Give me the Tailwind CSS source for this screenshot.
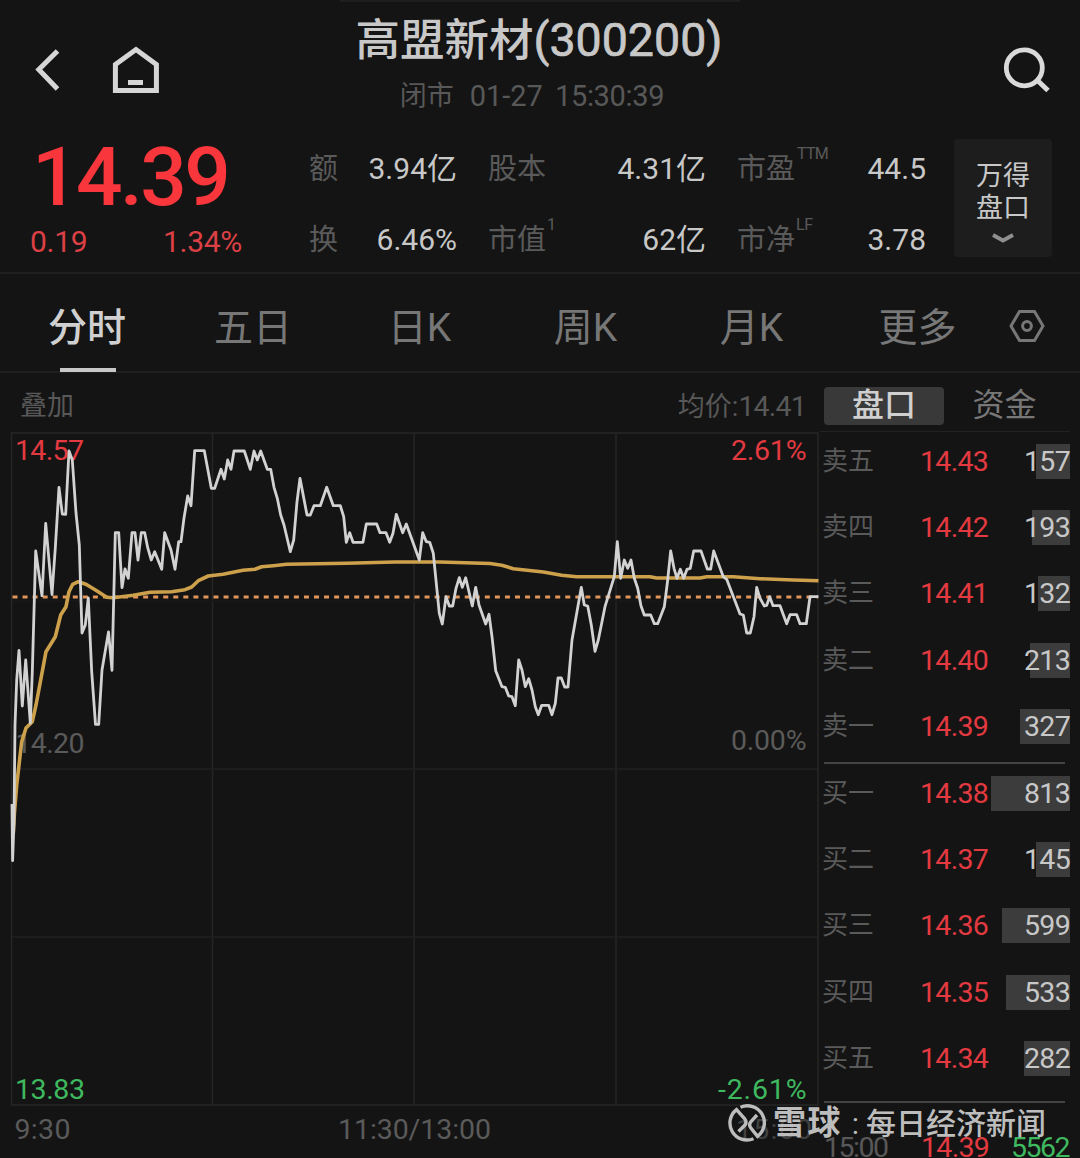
<!DOCTYPE html>
<html lang="zh-CN">
<head>
  <meta charset="UTF-8">
  <meta name="viewport" content="width=device-width, initial-scale=1.0">
  <title>高盟新材(300200)</title>
  <script src="https://cdn.jsdelivr.net/npm/@tailwindcss/browser@4"></script>
</head>
<body class="bg-[#141414] font-['Roboto','Noto_Sans_CJK_SC',sans-serif] text-[#c8c8c8]">
<div class="relative w-[1080px] h-[1158px] overflow-hidden flex flex-col">

  <!--header-->
  <header class="h-[123px] shrink-0 flex justify-between">
    <div class="w-[300px] flex items-start">
      <svg class="w-[30px] h-[46px] ml-[33px] mt-[46px]" viewBox="0 0 30 46" fill="none" stroke="#d6d6d6" stroke-width="5"><path d="M24.500 5 5.800 23.500 24.500 43"/></svg>
      <svg class="w-[48px] h-[52px] ml-[49px] mt-[44px]" viewBox="0 0 48 52" fill="none" stroke="#d6d6d6" stroke-width="5"><path d="M3.400 20.500 24 5.500 44.400 20.500V46.400H3.400Z"/><path d="M16 38.500H31"/></svg>
    </div>
    <div class="border-t-2 border-[#1e1e1e] w-[400px] text-center whitespace-nowrap">
      <h1 class="h-[76px] leading-[76px] pr-[2px] text-[44.500px] font-medium">高盟新材<span class="text-[46.500px] font-normal [-webkit-text-stroke:0.7px_#c8c8c8]">(300200)</span></h1>
      <p class="h-[36px] leading-[37px] pr-[16px] text-[27px] text-[#585858] flex justify-center gap-[16px]"><span>闭市</span><span class="text-[29px]">01-27</span><span class="text-[29px] -ml-[4px] tracking-[-0.3px]">15:30:39</span></p>
    </div>
    <div class="w-[300px] flex justify-end">
      <svg class="w-[50px] h-[50px] mr-[28px] mt-[44px]" viewBox="0 0 50 50" fill="none" stroke="#dadada" stroke-width="4.800"><circle cx="22.300" cy="23.800" r="18"/><path d="M35 36 46 46.500" stroke-width="5"/></svg>
    </div>
  </header>

  <!--quote-->
  <section class="h-[151px] shrink-0 flex border-b-2 border-[#1f1f1f]">
    <div class="w-[310px] text-[#f9363c]">
      <div class="h-[104px] leading-[109px] pl-[32px] text-[82px] font-medium tracking-[-2.600px]">14.39</div>
      <div class="h-[30px] leading-[30px] pl-[30px] pr-[68px] flex justify-between text-[30px] text-[#dc4045] tracking-[-0.3px]"><span>0.19</span><span>1.34%</span></div>
    </div>
    <div class="w-[616px] pt-[10px] text-[30px] leading-[71px] grid grid-cols-[147px_32px_217px_32px_188px] content-start whitespace-nowrap">
      <div class="flex justify-between"><span class="-ml-px text-[29px] leading-[73px] h-[71px] text-[#5a5a5a]">额</span><span>3.94亿</span></div>
      <div></div>
      <div class="flex justify-between"><span class="-ml-px text-[29px] leading-[73px] h-[71px] text-[#5a5a5a]">股本</span><span>4.31亿</span></div>
      <div></div>
      <div class="flex justify-between"><span class="-ml-px flex text-[29px] leading-[73px] h-[71px] text-[#5a5a5a]">市盈<sup class="text-[16px] leading-[41px] top-0 ml-[2px] tracking-[-0.8px]">TTM</sup></span><span>44.5</span></div>
      <div class="flex justify-between"><span class="-ml-px text-[29px] leading-[73px] h-[71px] text-[#5a5a5a]">换</span><span>6.46%</span></div>
      <div></div>
      <div class="flex justify-between"><span class="-ml-px flex text-[29px] leading-[73px] h-[71px] text-[#5a5a5a]">市值<sup class="text-[16px] leading-[41px] top-0 ml-px">1</sup></span><span>62亿</span></div>
      <div></div>
      <div class="flex justify-between"><span class="-ml-px flex text-[29px] leading-[73px] h-[71px] text-[#5a5a5a]">市净<sup class="text-[16px] leading-[41px] top-0 ml-px tracking-[-0.5px]">LF</sup></span><span>3.78</span></div>
    </div>
    <div class="ml-[28px] mt-[16px] w-[98px] h-[118px] pt-[21px] rounded-sm bg-[#1d1d1d] flex flex-col items-center text-[27px] leading-[32px]">
      <span>万得</span>
      <span>盘口</span>
      <svg class="w-[24px] h-[12px] mt-[8px]" viewBox="0 0 24 12" fill="none" stroke="#8f8f8f" stroke-width="3.800"><path d="M2 3 12 8.500 22 3"/></svg>
    </div>
  </section>

  <!--period tabs-->
  <nav class="h-[99px] shrink-0 pl-[4px] flex border-b-2 border-[#1f1f1f] text-[39px] leading-[108px] text-[#777] text-center">
    <a class="w-[166px] h-[97px] flex flex-col items-center font-medium text-[#d0d0d0]">
      <span class="h-[94px]">分时</span>
      <span class="w-[56px] h-[4px] shrink-0 ml-[2px] bg-[#c8c8c8]"></span>
    </a>
    <a class="w-[166px]">五日</a>
    <a class="w-[167px]">日K</a>
    <a class="w-[165px]">周K</a>
    <a class="w-[167px]">月K</a>
    <a class="w-[165px]">更多</a>
    <svg class="w-[36px] h-[34px] ml-[9px] mt-[35px]" viewBox="0 0 36 34" fill="none" stroke="#777" stroke-width="3"><path d="M10.500 2.500H25.500L34 17 25.500 31.500H10.500L2 17Z"/><circle cx="18" cy="17" r="4.400"/></svg>
  </nav>

  <main class="flex grow">
    <!--chart-->
    <section class="w-[820px] shrink-0">
      <div class="h-[59px] leading-[67px] pl-[20px] pr-[14px] flex justify-between text-[27px] text-[#585858]">
        <span>叠加</span><span>均价:<span class="text-[28.500px] tracking-[-0.800px]">14.41</span></span>
      </div>
      <svg class="w-[820px] h-[726px]" viewBox="0 432 820 726" font-size="28.500" fill="none">
        <g stroke="#262626" stroke-width="1.500">
          <path d="M11.500 433H818V1105H11.500ZM212.500 433V1105M414 433V1105M616 433V1105"/>
          <path d="M12 601H818" stroke="#191919"/>
          <path d="M12 769H818M12 937H818" stroke="#202020"/>
        </g>
        <g fill="#5a5a5a">
          <text x="15.500" y="753" textLength="69">14.20</text>
          <text x="731" y="749.500" textLength="75.500">0.00%</text>
          <text x="14.500" y="1139" textLength="56">9:30</text>
          <text x="338" y="1139" textLength="153">11:30/13:00</text>
          <text x="736" y="1139" textLength="76" fill="#404040">15:00</text>
        </g>
        <text x="15" y="459.500" textLength="69" fill="#e23a40">14.57</text>
        <text x="731" y="459.500" textLength="75.500" fill="#e23a40">2.61%</text>
        <text x="15" y="1099" textLength="70" fill="#3fb95f">13.83</text>
        <text x="718" y="1098.500" textLength="88.500" fill="#3fb95f">-2.61%</text>
        <path d="M12.500 597H818" stroke="#e0955a" stroke-width="2.800" stroke-dasharray="5 5.050"/>
        <!--average price-->
        <polyline stroke="#cda14c" stroke-width="3.600" stroke-linejoin="round" points="13.300,833 14.500,812 16.700,785 21.700,741.700 26,728 32.300,721.700 36,705 46,651.700 55.300,636.700 60.700,615 66,606.700 69,591.700 72.700,584.300 78.300,581.700 86,584.300 96.700,590.700 106.700,597.300 113.300,597.700 133.300,595.300 150,592.300 171.700,591.700 185,589.700 191.700,587 198.300,580.700 208.300,576 223,574.300 243,570.300 255,569.300 261.700,566.700 273.300,565.700 286.700,564.300 346.700,563.200 395,562 440,562 490,563.500 501.700,565.300 513.300,568.700 543.300,572 561.700,575.300 576.700,576.700 650,576.700 656.700,578 700,578 706.700,576.700 733.300,576.700 760,578.700 793.300,580 818.500,580.700"/>
        <!--price-->
        <polyline stroke="#d2d2d2" stroke-width="2.800" stroke-linejoin="round" points="12,804 12.600,860.700 14,822 15,725 16.700,680 19,650.300 22.300,706 25.700,660 30.300,723 32.300,672 35.700,551 42,595.700 45.700,523.300 52,594.500 55.300,548 59,487.300 62.300,514 65.700,514.300 69,451 72.300,460 76,513 79.300,545 82,633 85.300,625 88.300,598 91.700,671.700 95.500,724.300 98.700,724.300 102,670 108.500,632 112,670.300 115.300,532.700 118.700,532.700 122,587.700 125,569 128.300,578.300 132,532.700 135,532.700 138,560 141.300,532.700 144.700,532.700 147.700,547.700 151.300,560 154.700,551.700 161.700,569.300 164.700,532.700 171,550 175,569.300 178.700,541.700 181,541.700 184,518 187.700,496 191,505.700 194.700,450.700 204.300,450.700 211.300,488.300 214.700,488.300 221,469.300 224.300,479 227.700,460 231,469.300 234,451 244.300,451 250.300,469.300 254,451 257.300,460 260.700,451 267.300,469.300 270.700,469.300 274,487.300 277.300,498.300 280.700,515 284,525 290.300,551.700 293.700,540 297,501.700 300,478.300 307,515 310.300,515 314,505.700 320.300,505.700 326.700,487.300 333.300,505.700 340.300,505.700 343.700,516.700 346.300,542.300 349.700,532.700 353,542.300 363,542.300 366.300,524 376.700,524 380,532.700 386,532.700 389.700,542.300 393,533.300 396.300,514.300 402.700,532.700 406.300,524 419.300,560 422.700,532.700 426.300,541.700 429.700,542.300 433.300,553.300 439.300,613.300 442.300,624 446,596.700 449.300,606 452.700,606 456,588.300 459.300,577.700 462.300,587.300 465.700,577.700 472.300,606 475.700,587.300 479,605 485.700,624 489,614.300 492,636.700 495.700,670.700 502,686.700 505.300,687.300 508.700,696 512,696.700 515.300,705.700 518.700,660 522,670 525.300,686.700 528.700,678.700 532,690 535.300,706.700 538.300,714.700 541.700,705.300 548.700,705.300 552,714.700 555.300,703.300 558,678 561.300,678 564.700,687 568,687 572,640 581.300,587.300 584.300,605 587.700,606 591.300,625 595,651.300 598.300,640 605,606.700 614.300,576.700 617.300,541.700 620.700,578.300 624.300,560 627.700,568.300 631,560 634.300,578.300 637.700,588.300 641,606 644.300,615 650.700,615 654.300,623.700 657.700,623.700 664.300,606.700 667.300,583.300 670.700,551 674,568.300 677,578.300 680.300,569.300 683.700,578.300 687,569.300 690.300,568.300 693.700,551 701,551 707.300,569 710.700,569 713.700,551 723.300,576.700 726.700,579.300 740,614 743.300,615 746.700,633 750.300,633 754,616.700 756.700,587.300 760,598.300 764.300,606 766.700,605.300 769.700,596.700 773,605.700 780,605.700 786.700,623.700 790,614.700 796.700,614.700 800,623.700 806.300,623.700 810,596.700 818.500,596.700"/>
      </svg>
    </section>

    <!--order book-->
    <aside class="w-[260px] text-[28.500px] tracking-[-0.700px]">
      <div class="h-[59px] w-[250px] pl-[4px] pt-[14px] pb-[6px] flex text-[32px] leading-[37px] tracking-normal text-center border-b border-[#222]">
        <span class="w-[120px] h-[38px] rounded bg-[#393939] font-medium text-[#d0d0d0]">盘口</span>
        <span class="w-[121px] text-[#777]">资金</span>
      </div>
      <div id="sell" class="-mt-[4px]"></div>
      <hr class="ml-[4px] mr-[15px] mt-[2px] mb-[-4px] h-[2px] border-0 bg-[#444]">
      <div id="buy"></div>
      <hr class="ml-[4px] mr-[15px] mt-[9px] h-[2px] border-0 bg-[#444]">
      <div class="ml-[4px] mr-[11px] mt-[25px] leading-[40px] flex">
        <span class="w-[97px] text-[#585858] tracking-[-1.500px]">15:00</span><span class="text-[#e23a40]">14.39</span><span class="ml-auto text-[#3fb95f] tracking-[-1.500px]">5562</span>
      </div>
    </aside>
  </main>

  <!--watermark-->
  <div class="absolute left-[728px] top-[1102px] h-[42px] flex items-center text-[#bdbdbd]">
    <svg class="w-[38px] h-[38px]" viewBox="0 0 38 38" fill="none" stroke="#bdbdbd" stroke-width="3.400">
      <path d="M12.500 3.200A17 17 0 0 1 29.500 32.400L22.500 23.500Q20.500 20.500 23 17.500L29 11"/>
      <path d="M25.500 34.700A17 17 0 0 1 8.500 5.600L16.500 14.500Q19.500 18.500 16.500 21.500L10.500 27.500"/>
    </svg>
    <span class="ml-[7px] text-[33px] font-bold tracking-[1.500px]">雪球</span>
    <span class="ml-[3px] w-[21px] text-[30px] text-center">:</span>
    <span class="text-[30px] font-medium">每日经济新闻</span>
  </div>
</div>

<script>
const sell = [
  ["卖五", "14.43", 157, 34],
  ["卖四", "14.42", 193, 38],
  ["卖三", "14.41", 132, 32],
  ["卖二", "14.40", 213, 40],
  ["卖一", "14.39", 327, 50]
];
const buy = [
  ["买一", "14.38", 813, 79],
  ["买二", "14.37", 145, 34],
  ["买三", "14.36", 599, 68],
  ["买四", "14.35", 533, 64],
  ["买五", "14.34", 282, 46]
];

// label, price, then the volume over its bar
function row([label, price, volume, width]) {
  return `<div class="h-[66.4px] pl-[2px] pr-[10px] flex items-center leading-[35px]">
    <span class="w-[98px] text-[26px] tracking-normal text-[#5a5a5a]">${label}</span>
    <span class="text-[#e23a40]">${price}</span>
    <span class="ml-auto h-[35px] flex justify-end bg-[#3c3c3c] whitespace-nowrap" style="width:${width}px">${volume}</span>
  </div>`;
}

document.getElementById("sell").innerHTML = sell.map(row).join("");
document.getElementById("buy").innerHTML = buy.map(row).join("");
</script>
</body>
</html>
